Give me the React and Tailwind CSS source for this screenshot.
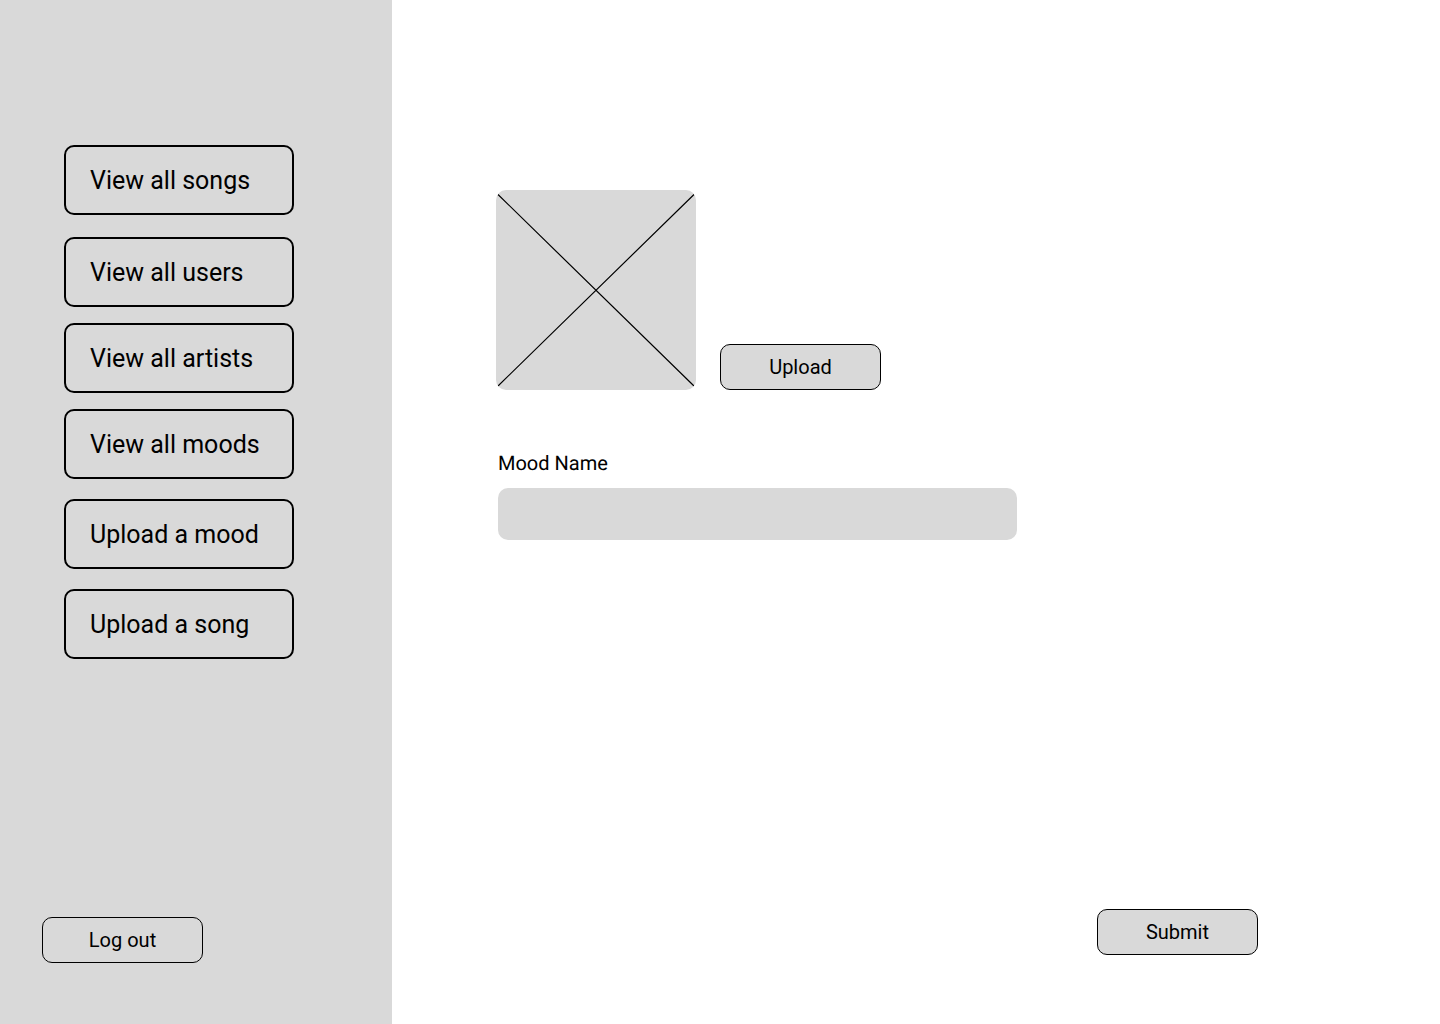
import React from 'react';

const links = [
  { label: 'View all songs', className: 'mb-[22px]' },
  { label: 'View all users', className: 'mb-4' },
  { label: 'View all artists', className: 'mb-4' },
  { label: 'View all moods', className: 'mb-5' },
  { label: 'Upload a mood', className: 'mb-5' },
  { label: 'Upload a song', className: '' },
];

const SmallButton = ({ children, className = '' }) => (
  <button className={`w-[161px] h-[46px] shrink-0 rounded-[10px] border border-black bg-[#d9d9d9] text-[20px] text-black ${className}`}>
    {children}
  </button>
);

export default function App() {
  return (
    <div className="flex h-[1024px] w-[1440px] overflow-hidden bg-white font-['Roboto',sans-serif] text-black antialiased [text-rendering:geometricPrecision]">
      {/* Sidebar */}
      <aside className="flex w-[392px] shrink-0 flex-col bg-[#d9d9d9] pl-[42px] pt-[145px] pb-[61px]">
        <nav className="ml-[22px] flex flex-col">
          {links.map((link) => (
            <button
              key={link.label}
              className={`h-[70px] w-[230px] rounded-[10px] border-2 border-black pl-6 pt-0.5 text-left text-[25px] ${link.className}`}
            >
              {link.label}
            </button>
          ))}
        </nav>
        <SmallButton className="mt-auto">Log out</SmallButton>
      </aside>

      {/* Main */}
      <main className="flex flex-1 flex-col pl-[104px] pt-[190px] pb-[69px]">
        <div className="flex items-end gap-6">
          <div className="h-[200px] w-[200px] overflow-hidden rounded-[10px] bg-[#d9d9d9]">
            <svg width="200" height="200" viewBox="0 0 200 200" className="block">
              <path d="M2 4.5 L198 196 M198 4.5 L2 196" stroke="#000" strokeWidth="1.2" fill="none" />
            </svg>
          </div>
          <SmallButton>Upload</SmallButton>
        </div>

        <label className="ml-0.5 mt-[61px] text-[20px] leading-6">Mood Name</label>
        <div className="ml-0.5 mt-[13px] h-[52px] w-[519px] rounded-[10px] bg-[#d9d9d9]" />

        <SmallButton className="ml-[601px] mt-auto">Submit</SmallButton>
      </main>
    </div>
  );
}
